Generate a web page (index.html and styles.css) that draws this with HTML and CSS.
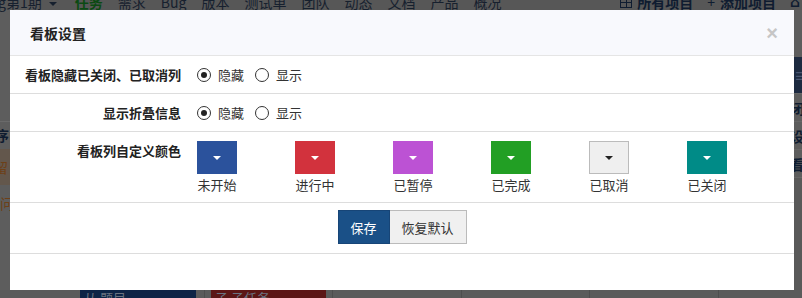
FILE: index.html
```html
<!DOCTYPE html>
<html lang="zh-CN">
<head>
<meta charset="utf-8">
<title>看板设置</title>
<link rel="stylesheet" href="styles.css">
</head>
<body>
<div class="page">
  <div class="nav">
    <div class="nav-left">
      <span class="nav-proj">g第1期 <span class="nav-caret"></span></span>
      <span class="nav-item active">任务</span>
      <span class="nav-item">需求</span>
      <span class="nav-item">Bug</span>
      <span class="nav-item">版本</span>
      <span class="nav-item">测试单</span>
      <span class="nav-item">团队</span>
      <span class="nav-item">动态</span>
      <span class="nav-item">文档</span>
      <span class="nav-item">产品</span>
      <span class="nav-item">概况</span>
    </div>
    <div class="nav-right">
      <span class="nav-strong"><span class="grid-ico"></span>所有项目</span>
      <span class="nav-strong"><span class="plus">+</span>添加项目</span>
      <span class="nav-strong home">⌂</span>
    </div>
  </div>
  <div class="mid">
    <div class="strip-left">
      <div class="sl-gap"></div>
      <div class="sl-head">序</div>
      <div class="sl-warn">留问</div>
      <div class="sl-rest"></div>
    </div>
    <div class="strip-right">
      <div class="sr-gap"></div>
      <div class="sr-dark">≡</div>
      <div class="sr-row">闭</div>
      <div class="sr-row">设</div>
      <div class="sr-row">看</div>
      <div class="sr-rest"></div>
    </div>
  </div>
  <div class="board">
    <div class="col col-a"><span class="chip chip-blue">从 题目</span></div>
    <div class="col col-b"><span class="chip chip-red">子 子任务</span></div>
    <div class="col col-c"></div>
    <div class="col col-d"></div>
    <div class="col col-e"></div>
  </div>

  <div class="modal">
    <div class="modal-header">
      <div class="modal-title">看板设置</div>
      <div class="modal-close">×</div>
    </div>
    <div class="modal-body">
      <div class="form-row row-radio">
        <div class="form-label">看板隐藏已关闭、已取消列</div>
        <div class="form-control">
          <label class="radio"><span class="radio-dot checked"></span>隐藏</label>
          <label class="radio"><span class="radio-dot"></span>显示</label>
        </div>
      </div>
      <div class="form-row row-radio">
        <div class="form-label">显示折叠信息</div>
        <div class="form-control">
          <label class="radio"><span class="radio-dot checked"></span>隐藏</label>
          <label class="radio"><span class="radio-dot"></span>显示</label>
        </div>
      </div>
      <div class="form-row row-colors">
        <div class="form-label label-top">看板列自定义颜色</div>
        <div class="form-control colors">
          <div class="color-item"><span class="swatch sw-wait"><span class="caret"></span></span><span class="color-name">未开始</span></div>
          <div class="color-item"><span class="swatch sw-doing"><span class="caret"></span></span><span class="color-name">进行中</span></div>
          <div class="color-item"><span class="swatch sw-pause"><span class="caret"></span></span><span class="color-name">已暂停</span></div>
          <div class="color-item"><span class="swatch sw-done"><span class="caret"></span></span><span class="color-name">已完成</span></div>
          <div class="color-item"><span class="swatch sw-cancel"><span class="caret dark"></span></span><span class="color-name">已取消</span></div>
          <div class="color-item"><span class="swatch sw-closed"><span class="caret"></span></span><span class="color-name">已关闭</span></div>
        </div>
      </div>
      <div class="form-row row-actions">
        <button class="btn btn-primary">保存</button><button class="btn btn-default">恢复默认</button>
      </div>
    </div>
  </div>
</div>
</body>
</html>
```

FILE: styles.css
```css
* { box-sizing: border-box; }
html, body { margin: 0; padding: 0; }
body {
  font-family: "Noto Sans CJK SC", "Liberation Sans", sans-serif;
  font-size: 13px;
  color: #333;
  background: #5d5d5d;
}
.page {
  position: relative;
  width: 802px;
  height: 298px;
  overflow: hidden;
  background: #5d5d5d;
  display: flex;
  flex-direction: column;
}

/* background nav (dimmed) */
.nav {
  height: 10px;
  display: flex;
  justify-content: space-between;
  font-size: 14px;
  line-height: 14px;
  color: #16202e;
  background: #575757;
  white-space: nowrap;
}
.nav-left, .nav-right {
  display: flex;
  margin-top: -5px;
}
.nav-proj { margin-left: -2px; }
.nav-caret {
  display: inline-block;
  width: 0; height: 0;
  border-left: 4px solid transparent;
  border-right: 4px solid transparent;
  border-top: 4px solid #16202e;
  margin-left: 4px;
  vertical-align: middle;
}
.nav-item { margin-left: 15px; }
.nav-item.active { margin-left: 18px; color: #0b4a12; font-weight: bold; }
.nav-right { gap: 14px; margin-right: 0; font-weight: bold; color: #0f1c30; }
.home { width: 12px; overflow: hidden; font-family: "DejaVu Sans", sans-serif; }
.grid-ico {
  display: inline-block;
  width: 12px; height: 11px;
  border: 1px solid #0f1c30;
  margin-right: 5px;
  background:
    linear-gradient(#0f1c30, #0f1c30) center/1px 100% no-repeat,
    linear-gradient(#0f1c30, #0f1c30) center/100% 1px no-repeat;
}
.plus { margin-right: 5px; font-weight: normal; }

.mid {
  flex: 1;
  display: flex;
  justify-content: space-between;
}
.strip-left {
  width: 10px;
  display: flex;
  flex-direction: column;
  color: #0f1c30;
  font-weight: bold;
  font-size: 14px;
  overflow: hidden;
}
.sl-gap { height: 112px; border-bottom: 1px solid #6a6a6a; }
.sl-head { height: 27px; line-height: 27px; margin-left: -5px; }
.sl-warn { height: 36px; line-height: 36px; background: #63574c; color: #6d4018; font-weight: normal; text-indent: -6px; }
.sl-rest { flex: 1; }
.strip-right {
  width: 8px;
  display: flex;
  flex-direction: column;
  color: #0f1c30;
  font-size: 14px;
  font-weight: bold;
  overflow: hidden;
}
.sr-gap { height: 47px; }
.sr-dark { height: 36px; background: #1d2a40; color: #4a5670; line-height: 36px; }
.sr-row { height: 28px; line-height: 28px; border-top: 1px solid #666; text-indent: -4px; }
.sr-rest { flex: 1; background: #595959; border-top: 1px solid #666; }

.board {
  height: 8px;
  display: flex;
  background: #5b5b5b;
  overflow: hidden;
}
.col { border-right: 1px solid #4e4e4e; }
.col-a { width: 205px; padding-left: 80px; }
.col-b { width: 128px; padding-left: 6px; }
.col-c { width: 129px; }
.col-d { width: 128px; }
.col-e { width: 129px; }
.chip {
  display: block;
  width: 116px;
  height: 20px;
  line-height: 16px;
  font-size: 13px;
  padding-left: 4px;
  color: #6a7280;
}
.chip-blue { background: #0e2446; }
.chip-red { background: #5c1616; width: 115px; }

/* modal */
.modal {
  position: absolute;
  left: 10px;
  top: 10px;
  width: 784px;
  height: 280px;
  background: #fff;
}
.modal-header {
  height: 46px;
  background: #f8f9fd;
  border-bottom: 1px solid #e5e5e5;
  display: flex;
  align-items: center;
  justify-content: space-between;
  padding: 0 16px 0 20px;
}
.modal-title {
  font-size: 14px;
  font-weight: bold;
  color: #222;
}
.modal-close {
  font-size: 20px;
  font-weight: bold;
  color: #c6c6c6;
  line-height: 20px;
  font-family: "Liberation Sans", sans-serif;
}
.form-row {
  display: flex;
  border-bottom: 1px solid #ddd;
}
.row-radio { height: 38px; align-items: center; }
.form-label {
  width: 171px;
  text-align: right;
  font-weight: bold;
  color: #222;
  flex: none;
}
.form-control {
  margin-left: 16px;
  display: flex;
  align-items: center;
}
.radio {
  display: flex;
  align-items: center;
  margin-right: 11px;
  color: #333;
}
.radio-dot {
  width: 14px;
  height: 14px;
  border: 1px solid #333;
  border-radius: 50%;
  margin-right: 7px;
  display: flex;
  align-items: center;
  justify-content: center;
  background: #fff;
}
.radio-dot.checked::after {
  content: "";
  width: 6px;
  height: 6px;
  border-radius: 50%;
  background: #222;
}
.row-colors { height: 71px; padding-top: 9px; }
.label-top { line-height: 19px; }
.colors { align-items: flex-start; }
.color-item {
  width: 98px;
  display: flex;
  flex-direction: column;
  align-items: flex-start;
}
.swatch {
  width: 40px;
  height: 33px;
  display: flex;
  align-items: center;
  justify-content: center;
}
.caret {
  width: 0; height: 0;
  border-left: 4px solid transparent;
  border-right: 4px solid transparent;
  border-top: 4px solid #fff;
}
.caret.dark { border-top-color: #222; }
.color-name {
  width: 40px;
  text-align: center;
  line-height: 22px;
  color: #333;
}
.sw-wait { background: #2b529c; }
.sw-doing { background: #d2323d; }
.sw-pause { background: #bc52d4; }
.sw-done { background: #229f24; }
.sw-cancel { background: #efefef; border: 1px solid #bbb; }
.sw-closed { background: #008b87; }
.row-actions {
  height: 51px;
  justify-content: center;
  align-items: center;
  padding-bottom: 2px;
}
.btn {
  height: 34px;
  font-family: inherit;
  font-size: 13px;
  border: 1px solid;
  padding: 0;
  margin: 0;
}
.btn-primary {
  width: 52px;
  background: #1a5087;
  border-color: #174577;
  color: #fff;
}
.btn-default {
  width: 77px;
  background: #f0f0f0;
  border-color: #bbb;
  border-left: none;
  color: #333;
}
```
